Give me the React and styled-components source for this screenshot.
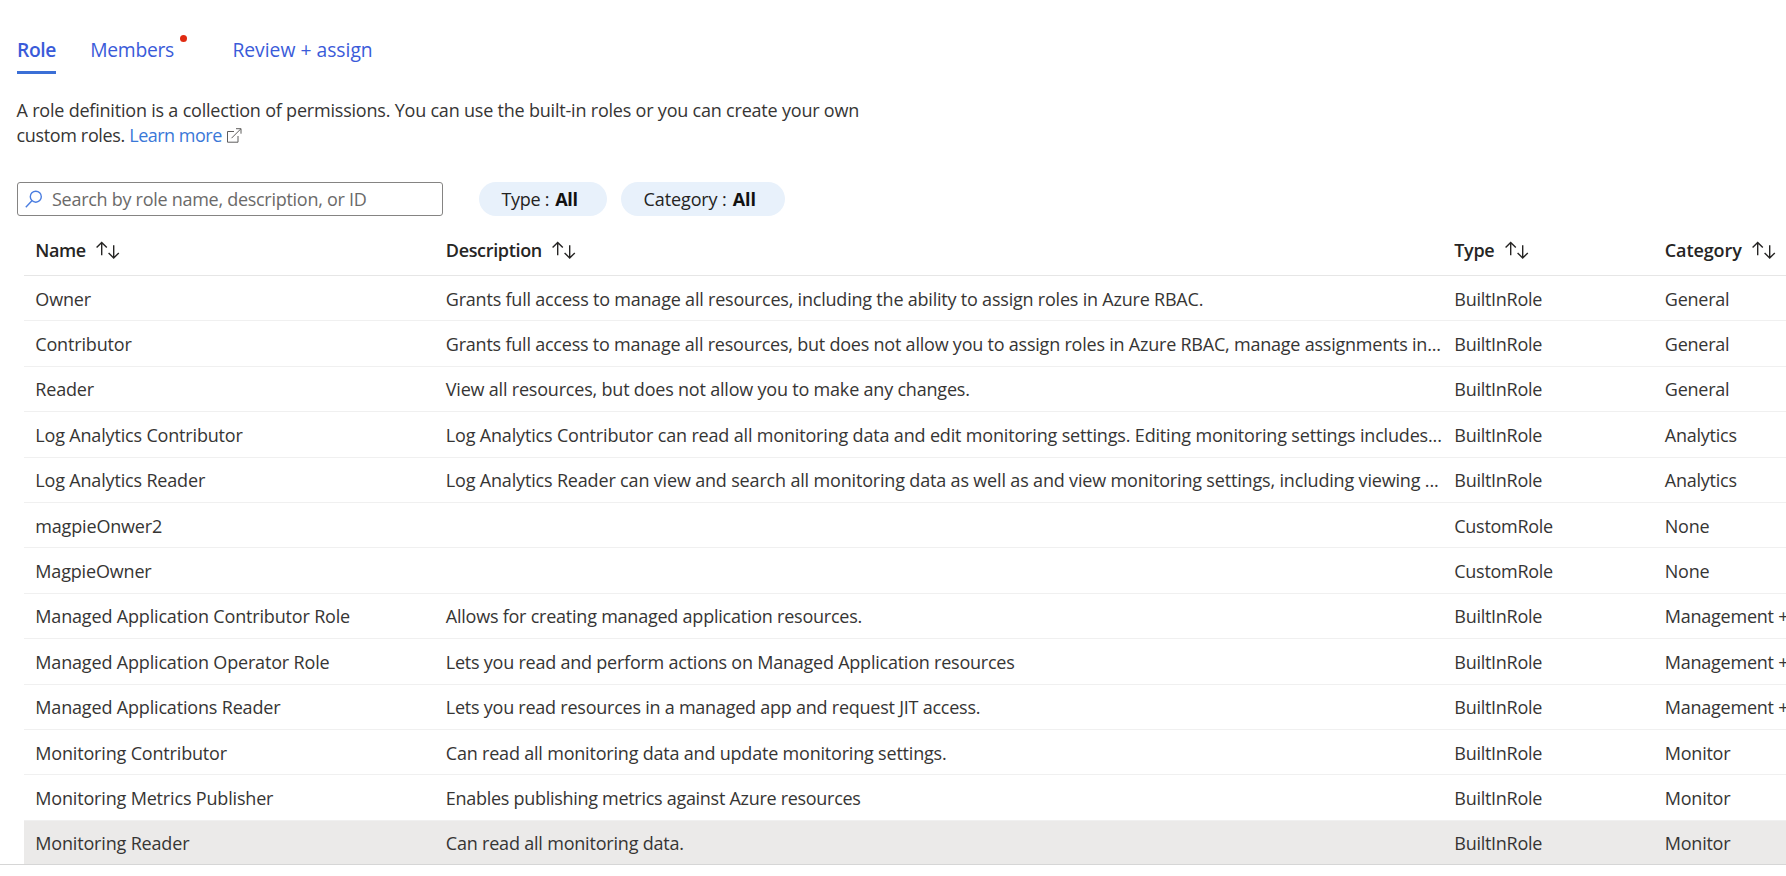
import React from "react";
import styled, { createGlobalStyle } from "styled-components";

const GlobalStyle = createGlobalStyle`
  *, *::before, *::after { box-sizing: border-box; }
  html, body { margin: 0; background: #fff; overflow: hidden; }
  body {
    font-family: "Open Sans", "Noto Sans", sans-serif;
    font-size: 18px;
    letter-spacing: -0.2px;
    color: #363534;
  }
`;

const Page = styled.main`
  width: 100%;
  height: 876px;
  overflow: hidden;
`;

const Tabs = styled.nav`
  display: flex;
  align-items: flex-start;
  height: 74px;
  padding: 35px 0 0 17px;
`;

const Tab = styled.a`
  position: relative;
  height: 39px;
  margin-right: ${(p) => p.$gap || 0}px;
  border-bottom: 3px solid ${(p) => (p.$active ? "#3b6fd6" : "transparent")};
  color: #3a5bd9;
  font-size: 19.3px;
  font-weight: ${(p) => (p.$active ? 600 : 400)};
  line-height: 29px;
  letter-spacing: ${(p) => p.$spacing || 0}px;
  white-space: nowrap;
`;

const AlertDot = styled.span`
  position: absolute;
  top: 0;
  right: -13px;
  width: 7px;
  height: 7px;
  border-radius: 50%;
  background: #e02b12;
`;

const Intro = styled.p`
  width: 870px;
  margin: 24px 0 0 16.5px;
  line-height: 25px;
  letter-spacing: -0.205px;
`;

const LearnMore = styled.a`
  color: #3a78d8;
  letter-spacing: -0.5px;
  svg { margin-left: 5px; vertical-align: -1px; }
`;

const IntroTail = styled.span`
  letter-spacing: -0.35px;
`;

const Toolbar = styled.div`
  display: flex;
  align-items: center;
  height: 34px;
  margin: 34px 0 0 16.5px;
`;

const SearchBox = styled.label`
  display: flex;
  align-items: center;
  width: 426.5px;
  height: 34px;
  margin-right: 36px;
  padding-left: 7.5px;
  border: 1px solid #858483;
  border-radius: 3px;
`;

const SearchInput = styled.input`
  flex: 1;
  height: 30px;
  margin-left: 9px;
  padding: 0;
  border: 0;
  outline: 0;
  background: transparent;
  font: inherit;
  letter-spacing: -0.28px;
  &::placeholder { color: #6b6a69; opacity: 1; }
`;

const Chip = styled.button`
  display: flex;
  align-items: center;
  gap: 6px;
  width: ${(p) => p.$width}px;
  height: 34px;
  margin: 0 14px 0 0;
  padding: 0 0 0 22.5px;
  border: 0;
  border-radius: 17px;
  background: #e8f1fb;
  color: #242322;
  font: inherit;
  letter-spacing: ${(p) => p.$spacing}px;
  white-space: nowrap;
`;

const ChipValue = styled.strong`
  font-weight: 700;
  color: #111;
`;

const Table = styled.div`
  margin-left: 24px;
`;

const Row = styled.div`
  display: grid;
  grid-template-columns: 410.5px 1008.5px 210.5px 1fr;
  align-items: center;
  height: ${(p) => (p.$selected ? 44.4 : 45.4)}px;
  padding: 1px 0 0 11.3px;
  border-bottom: 1px solid #f0f0f0;
  background: ${(p) => (p.$selected ? "#ebeae9" : "transparent")};
`;

const HeaderRow = styled(Row)`
  height: 60px;
  padding-top: 8px;
  border-bottom-color: #e6e6e6;
`;

const HeaderCell = styled.div`
  display: flex;
  align-items: center;
  gap: 10.5px;
  font-weight: 600;
  color: #262524;
  letter-spacing: ${(p) => p.$spacing}px;
  white-space: nowrap;
`;

const Cell = styled.div`
  min-width: 0;
  line-height: 28px;
  letter-spacing: ${(p) => p.$spacing || -0.2}px;
  white-space: nowrap;
`;

const BottomRule = styled.div`
  height: 1px;
  margin-top: -1px;
  background: #d6d6d6;
`;

const SearchIcon = () => (
  <svg width="18" height="18" viewBox="0 0 18 18" fill="none" stroke="#4a7de0" strokeWidth="1.4">
    <circle cx="10.8" cy="6.7" r="5.5" />
    <path d="M6.9 10.7L0.8 17.2" />
  </svg>
);

const ExternalIcon = () => (
  <svg width="15" height="15" viewBox="0 0 15 15" fill="none" stroke="#5f5e5d" strokeWidth="1">
    <path d="M7 3.5H.5V14.2H11V8" />
    <path d="M4.5 10.2L13.8 .9M9 .7H14V5.7" />
  </svg>
);

const SortIcon = () => (
  <svg width="24" height="18" viewBox="0 0 24 18" fill="none" stroke="#262524" strokeWidth="1.4">
    <path d="M5.7 14.3V1.6M.6 6.5L5.7 1.4L10.8 6.5" />
    <path d="M17.7 4.2V16.8M12.6 11.9L17.7 17L22.8 11.9" />
  </svg>
);

const columns = [
  { label: "Name", spacing: -0.4 },
  { label: "Description", spacing: -0.34 },
  { label: "Type", spacing: -0.35 },
  { label: "Category", spacing: -0.1 },
];

const roles = [
  { name: "Owner", description: "Grants full access to manage all resources, including the ability to assign roles in Azure RBAC.", spacing: -0.21, type: "BuiltInRole", category: "General" },
  { name: "Contributor", description: "Grants full access to manage all resources, but does not allow you to assign roles in Azure RBAC, manage assignments in...", spacing: -0.22, type: "BuiltInRole", category: "General" },
  { name: "Reader", description: "View all resources, but does not allow you to make any changes.", type: "BuiltInRole", category: "General" },
  { name: "Log Analytics Contributor", description: "Log Analytics Contributor can read all monitoring data and edit monitoring settings. Editing monitoring settings includes...", spacing: -0.17, type: "BuiltInRole", category: "Analytics" },
  { name: "Log Analytics Reader", description: "Log Analytics Reader can view and search all monitoring data as well as and view monitoring settings, including viewing ...", spacing: -0.17, type: "BuiltInRole", category: "Analytics" },
  { name: "magpieOnwer2", description: "", type: "CustomRole", category: "None" },
  { name: "MagpieOwner", description: "", type: "CustomRole", category: "None" },
  { name: "Managed Application Contributor Role", description: "Allows for creating managed application resources.", spacing: -0.23, type: "BuiltInRole", category: "Management +" },
  { name: "Managed Application Operator Role", description: "Lets you read and perform actions on Managed Application resources", spacing: -0.23, type: "BuiltInRole", category: "Management +" },
  { name: "Managed Applications Reader", description: "Lets you read resources in a managed app and request JIT access.", spacing: -0.24, type: "BuiltInRole", category: "Management +" },
  { name: "Monitoring Contributor", description: "Can read all monitoring data and update monitoring settings.", type: "BuiltInRole", category: "Monitor" },
  { name: "Monitoring Metrics Publisher", description: "Enables publishing metrics against Azure resources", spacing: -0.29, type: "BuiltInRole", category: "Monitor" },
  { name: "Monitoring Reader", description: "Can read all monitoring data.", type: "BuiltInRole", category: "Monitor" },
];

export default function App() {
  return (
    <Page>
      <GlobalStyle />
      <Tabs>
        <Tab $active $gap={34.3} $spacing={-0.4}>Role</Tab>
        <Tab $gap={58.5} $spacing={-0.3}>
          Members
          <AlertDot />
        </Tab>
        <Tab>Review + assign</Tab>
      </Tabs>
      <Intro>
        A role definition is a collection of permissions. You can use the built-in roles or you can create your own
        <br />
        <IntroTail>custom roles. </IntroTail>
        <LearnMore>
          Learn more
          <ExternalIcon />
        </LearnMore>
      </Intro>
      <Toolbar>
        <SearchBox>
          <SearchIcon />
          <SearchInput placeholder="Search by role name, description, or ID" />
        </SearchBox>
        <Chip $width={128} $spacing={-0.3}>
          Type : <ChipValue>All</ChipValue>
        </Chip>
        <Chip $width={164} $spacing={-0.1}>
          Category : <ChipValue>All</ChipValue>
        </Chip>
      </Toolbar>
      <Table>
        <HeaderRow>
          {columns.map((c) => (
            <HeaderCell key={c.label} $spacing={c.spacing}>
              {c.label}
              <SortIcon />
            </HeaderCell>
          ))}
        </HeaderRow>
        {roles.map((role, i) => (
          <Row key={role.name} $selected={i === roles.length - 1}>
            <Cell $spacing={-0.17}>{role.name}</Cell>
            <Cell $spacing={role.spacing}>{role.description}</Cell>
            <Cell $spacing={-0.28}>{role.type}</Cell>
            <Cell $spacing={-0.24}>{role.category}</Cell>
          </Row>
        ))}
      </Table>
      <BottomRule />
    </Page>
  );
}
